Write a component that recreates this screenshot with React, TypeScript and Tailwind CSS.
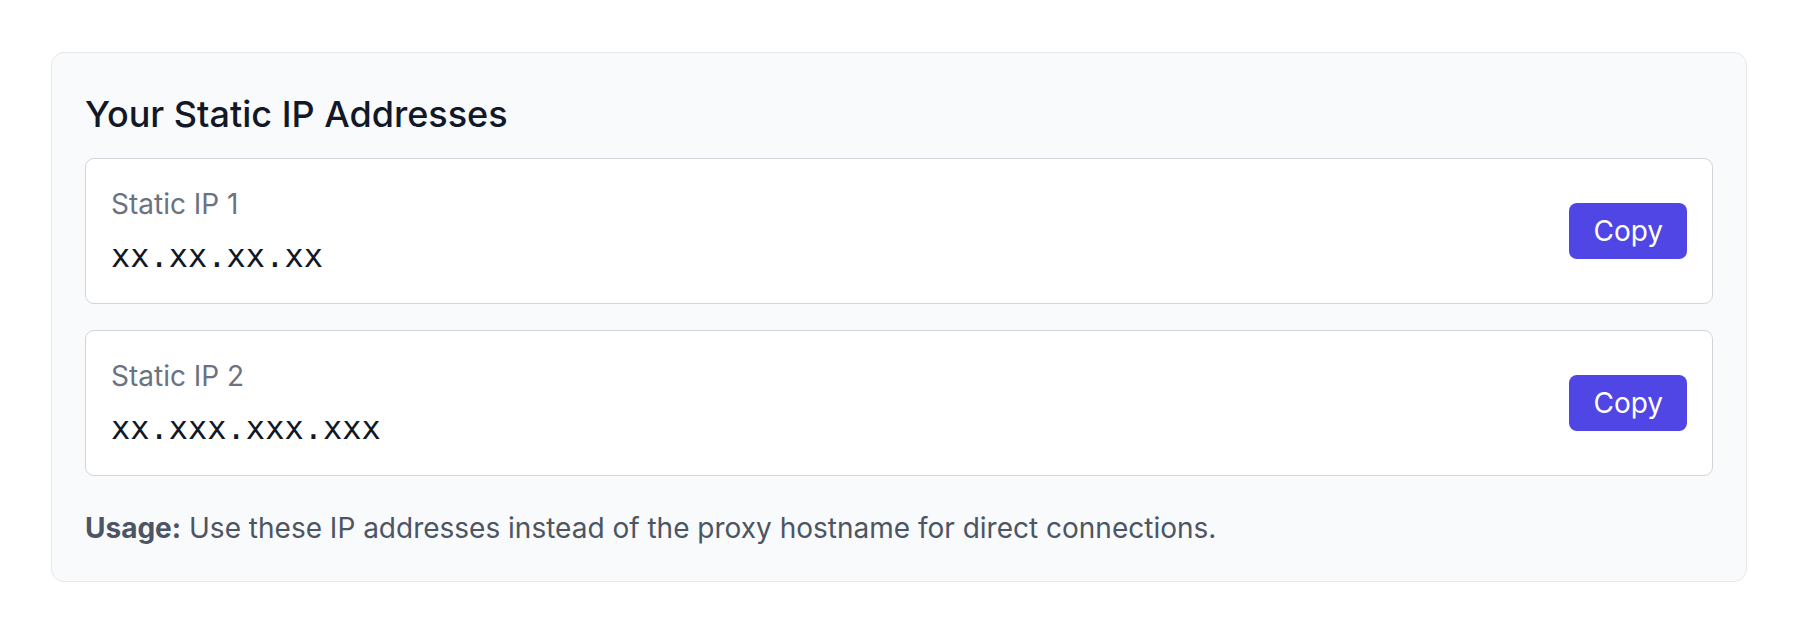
import { useState } from 'react'

const ips = [
    { label: 'Static IP 1', value: 'xx.xx.xx.xx' },
    { label: 'Static IP 2', value: 'xx.xxx.xxx.xxx' },
]

const IpRow = ({ label, value }: { label: string; value: string }) => {
    const [copied, setCopied] = useState(false)

    return (
        <div className="flex items-center justify-between bg-white border border-[#d1d5db] rounded-[9px] pl-[25px] pr-[25px] py-[25px]">
            <div className="flex flex-col gap-[10px]">
                <span className="text-[28px] leading-[40px] text-[#6b7280]">{label}</span>
                <span className="font-['DejaVu_Sans_Mono',monospace] text-[32px] leading-[44px] text-[#111827]">
                    {value}
                </span>
            </div>
            <button
                onClick={() => setCopied(true)}
                className="h-[56px] px-[24px] rounded-[8px] bg-[#4f46e5] text-white text-[28px] leading-none"
            >
                {copied ? 'Copy' : 'Copy'}
            </button>
        </div>
    )
}

export default function App() {
    return (
        <div className="min-h-screen bg-white pt-[52px] px-[51px] font-['Inter',sans-serif]">
            <div className="bg-[#f9fafb] border border-[#e5e7eb] rounded-[13px] pt-[39px] pb-[33px] px-[33px]">
                <h2 className="text-[36px] leading-[44px] font-medium text-[#111827]">
                    Your Static IP Addresses
                </h2>
                <div className="flex flex-col gap-[26px] mt-[22px]">
                    {ips.map((ip) => (
                        <IpRow key={ip.label} label={ip.label} value={ip.value} />
                    ))}
                </div>
                <p className="mt-[32px] text-[28px] leading-[40px] text-[#4b5563]">
                    <span className="font-bold">Usage:</span> Use these IP addresses instead of the
                    proxy hostname for direct connections.
                </p>
            </div>
        </div>
    )
}
